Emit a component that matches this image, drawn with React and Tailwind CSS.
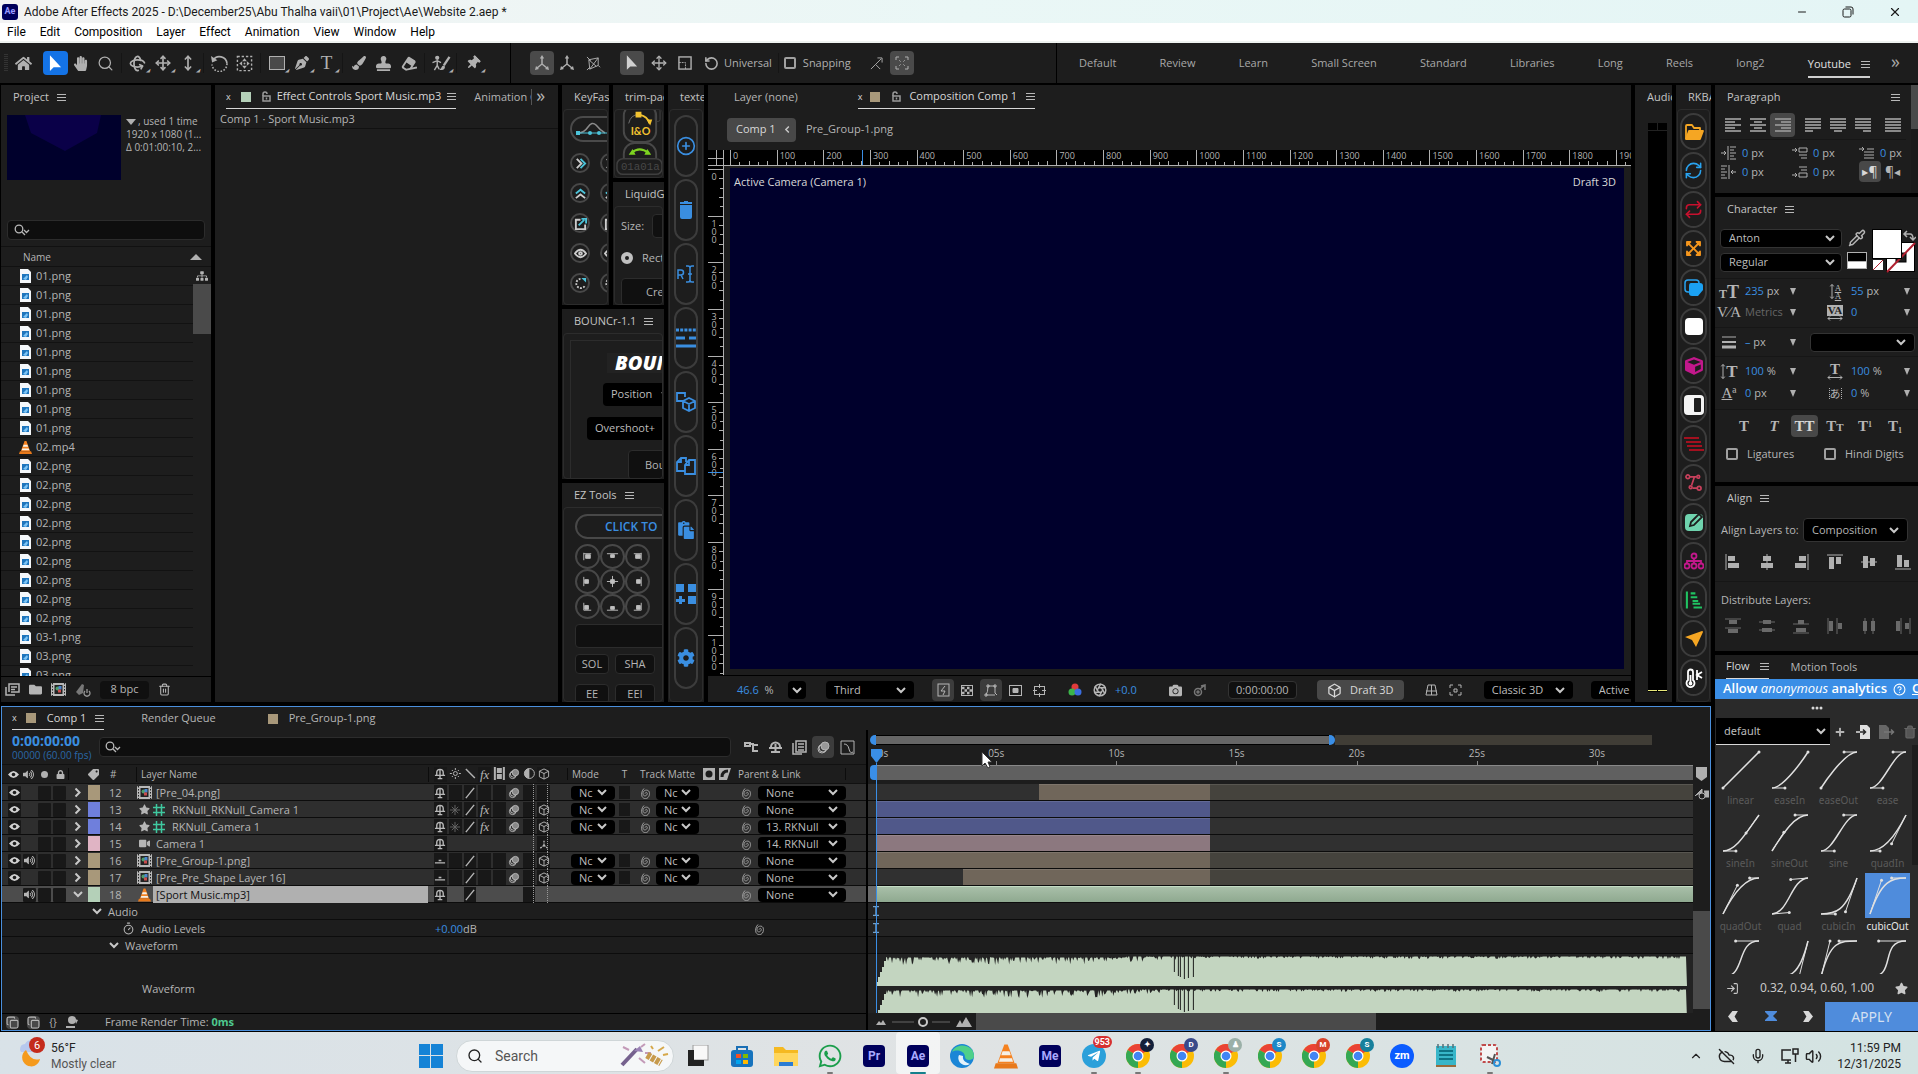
import { Fragment } from 'react';
import clsx from 'clsx';
import {
  FaHome, FaHandPaper, FaStamp, FaEraser, FaPaintBrush, FaThumbtack, FaCog, FaPaste,
  FaCube, FaSitemap, FaLocationArrow, FaExpandArrowsAlt, FaCamera, FaStar, FaFolder, FaTag,
  FaLock, FaVideo, FaWhatsapp, FaTelegramPlane, FaPenNib, FaPlus, FaVolumeUp,
} from 'react-icons/fa';
import {
  Search, CirclePlus, Repeat, RefreshCw, Trash2, Copy,
  RotateCcw, Rotate3d, Move, MoveVertical, Pipette, Aperture, Box, Timer, CircleHelp,
  ChevronUp, Mic, CloudOff, Volume2, LogIn, Minus, X,
} from 'lucide-react';

/* ---------- shared bits ---------- */

function Menu({ className }) {
  return (
    <svg viewBox="0 0 9 9" className={clsx('h-[9px] w-[9px] shrink-0', className)} stroke="#b8b8b8">
      <path d="M0 1.5h9M0 4.5h9M0 7.5h9" />
    </svg>
  );
}

function Chevron({ className }) {
  return (
    <svg viewBox="0 0 10 7" className={clsx('pointer-events-none h-[7px] w-[10px] shrink-0', className)} fill="none" stroke="#c8c8c8" strokeWidth="2">
      <path d="M1 1l4 4 4-4" />
    </svg>
  );
}

function Select({ value, label, className, chevron = 'right-2' }) {
  return (
    <div className={clsx('relative flex shrink-0 items-center rounded bg-black', className)}>
      <select aria-label={label} defaultValue={value} className="h-full w-full appearance-none bg-transparent pl-2 pr-4 text-[11px] text-[#bdbdbd] outline-none">
        <option>{value}</option>
      </select>
      <Chevron className={clsx('absolute', chevron)} />
    </div>
  );
}

function Panel({ className, children }) {
  return <section className={clsx('flex min-h-0 min-w-0 flex-col overflow-hidden bg-[#1d1d1d]', className)}>{children}</section>;
}

function Tab({ children, menu, className }) {
  return (
    <h2 className={clsx('flex h-6 shrink-0 items-center gap-2 whitespace-nowrap pl-3 text-[11px] text-[#c4c4c4]', className)}>
      {children}
      {menu && <Menu />}
    </h2>
  );
}

function LockIcon() {
  return (
    <svg viewBox="0 0 10 11" className="h-[11px] w-[10px] shrink-0" fill="none" stroke="#9a9a9a" strokeWidth="1.5">
      <path d="M2 5V3a2 2 0 0 1 4 0" />
      <path d="M2 5h7v5H2zM5.500 6.500v2" />
    </svg>
  );
}

function SearchMark() {
  return (
    <svg viewBox="0 0 18 12" className="h-3 w-[18px] shrink-0" fill="none" stroke="#b8b8b8" strokeWidth="1.300">
      <circle cx="5" cy="5" r="3.800" />
      <path d="M8 8l3 3M10 6l2.500 2.500L15 6" />
    </svg>
  );
}

/* ---------- window chrome ---------- */

function TitleBar() {
  return (
    <header className="flex h-[23px] shrink-0 items-center bg-gradient-to-r from-[#f3f3f3] via-[#eaf7f6] to-[#e4f5f5] font-['Roboto'] text-[12px] text-[#1a1a1a]">
      <div className="ml-[2px] mr-[6px] flex h-4 w-4 items-center justify-center rounded-[3px] bg-[#00005b] text-[9px] font-bold text-[#9999ff]">Ae</div>
      <h1>Adobe After Effects 2025 - D:\December25\Abu Thalha vaii\01\Project\Ae\Website 2.aep *</h1>
      <div className="ml-auto flex gap-[34px] pr-4">
        <button aria-label="Minimize"><Minus size={12} strokeWidth={2} /></button>
        <button aria-label="Restore">
          <svg viewBox="0 0 12 12" className="h-3 w-3" fill="none" stroke="currentColor">
            <rect x="1" y="3" width="8" height="8" rx="1.500" />
            <path d="M3.500 1H9a2 2 0 0 1 2 2v5.500" />
          </svg>
        </button>
        <button aria-label="Close"><X size={14} strokeWidth={2} /></button>
      </div>
    </header>
  );
}

const menus = ['File', 'Edit', 'Composition', 'Layer', 'Effect', 'Animation', 'View', 'Window', 'Help'];

function MenuBar() {
  return (
    <nav className="flex h-5 shrink-0 items-center gap-[14px] border-b-2 border-[#eef2f0] bg-white pl-[7px] font-['Roboto'] text-[12px] text-black">
      {menus.map((m) => (
        <button key={m}>{m}</button>
      ))}
    </nav>
  );
}

function Anchor() {
  return (
    <svg viewBox="0 0 18 18" className="h-[17px] w-[17px]" fill="none" stroke="currentColor" strokeWidth="1.500">
      <rect x="1.500" y="1.500" width="15" height="15" strokeDasharray="2.500 2" />
      <path d="M9 3.500l2.500 3h-5zM9 14.500l2.500-3h-5zM3.500 9l3 2.500v-5zM14.500 9l-3 2.500v-5z" fill="currentColor" stroke="none" />
      <circle cx="9" cy="9" r="1" fill="currentColor" stroke="none" />
    </svg>
  );
}

function Axis() {
  return (
    <svg viewBox="0 0 16 16" className="h-4 w-4" fill="none" stroke="currentColor" strokeWidth="1.500">
      <path d="M8 3v6M8 9l-5 4M8 9l5 4" />
      <path d="M8 0l2.200 3.500H5.800zM1 15l1-4 3 3zM15 15l-1-4-3 3z" fill="currentColor" stroke="none" />
    </svg>
  );
}

const toolGroups = [
  [{ name: 'Home', icon: <FaHome size={17} /> }],
  [
    { name: 'Selection', active: true, icon: <svg viewBox="0 0 14 18" className="h-[17px] w-[13px]"><path d="M1 0v17l4-4h8z" fill="#fff" /></svg> },
    { name: 'Hand', icon: <FaHandPaper size={15} /> },
    { name: 'Zoom', icon: <Search size={17} strokeWidth={1.75} /> },
  ],
  [
    { name: 'Orbit', more: true, icon: <Rotate3d size={17} strokeWidth={2.5} /> },
    { name: 'Pan', more: true, icon: <Move size={16} strokeWidth={2.5} /> },
    { name: 'Dolly', more: true, icon: <MoveVertical size={16} strokeWidth={2.5} /> },
  ],
  [
    { name: 'Rotation', icon: <svg viewBox="0 0 16 16" className="h-[17px] w-[17px]" fill="none" stroke="currentColor"><path d="M2 5a7 7 0 0 1 13 3" strokeWidth="1.500" /><path d="M15 8A7 7 0 0 1 1 9" strokeDasharray="1.500 1.500" strokeWidth="1.500" /><path d="M0 1l1 6 5-2z" fill="currentColor" stroke="none" /></svg> },
    { name: 'Pan Behind', icon: <Anchor /> },
  ],
  [
    { name: 'Rectangle', more: true, icon: <svg viewBox="0 0 16 14" className="h-[14px] w-4"><rect x="0.500" y="0.500" width="15" height="13" fill="#4a4a4a" stroke="currentColor" /></svg> },
    { name: 'Pen', more: true, icon: <FaPenNib size={14} /> },
    { name: 'Type', more: true, icon: <span className="font-['Liberation_Serif'] text-[19px] leading-5">T</span> },
  ],
  [
    { name: 'Brush', icon: <FaPaintBrush size={14} /> },
    { name: 'Clone Stamp', icon: <FaStamp size={15} /> },
    { name: 'Eraser', icon: <FaEraser size={15} className="-rotate-12" /> },
  ],
  [{ name: 'Roto Brush', more: true, icon: <svg viewBox="0 0 20 18" className="h-[17px] w-5" fill="none" stroke="currentColor" strokeWidth="1.500"><circle cx="6" cy="3" r="1.500" fill="currentColor" /><path d="M1 8l5-2 4 2M6 6v5l-3 5M6 11l2 4" /><path d="M19 2l-6 9" strokeWidth="2.500" /><path d="M13 11c-3 0-2 4-5 4 2 2 7 1 6-3z" fill="currentColor" stroke="none" /></svg> }],
  [{ name: 'Puppet Pin', more: true, icon: <FaThumbtack size={14} className="rotate-45" /> }],
];

const workspaces = ['Default', 'Review', 'Learn', 'Small Screen', 'Standard', 'Libraries', 'Long', 'Reels', 'long2'];

function Toolbar() {
  return (
    <div className="mb-[2px] flex h-10 shrink-0 items-center bg-[#1d1d1d] text-[11px] text-[#b0b0b0]">
      <svg viewBox="0 0 4 18" className="ml-1 mr-[3px] h-[18px] w-1" stroke="#4a4a4a"><path d="M1 0v18M3 0v18" strokeDasharray="1 1" /></svg>
      {toolGroups.map((group, i) => (
        <Fragment key={i}>
          {i > 0 && <i className={clsx('mx-[3px] h-5 w-px', i > 1 ? 'bg-[#151515]' : '')} />}
          {group.map((t) => (
            <button key={t.name} aria-label={t.name} className={clsx('relative flex h-6 w-[25px] items-center justify-center rounded', t.active && 'bg-[#1473e6]')}>
              {t.icon}
              {t.more && <i className="absolute bottom-[2px] right-0 text-[5px] leading-none">◢</i>}
            </button>
          ))}
        </Fragment>
      ))}
      <i className="ml-[25px] mr-[19px] h-full w-px bg-black" />
      <button aria-label="Local axis" className="flex h-6 w-6 items-center justify-center rounded bg-[#4a4a4a]"><Axis /></button>
      <button aria-label="World axis" className="flex h-6 w-[26px] items-center justify-center"><Axis /></button>
      <button aria-label="View axis" className="mr-[14px] flex h-6 w-[26px] items-center justify-center">
        <svg viewBox="0 0 16 16" className="h-[15px] w-[15px]" fill="none" stroke="currentColor"><path d="M3 4l10-2v8L4 14zM3 4l8 7M1 1l4 4M13 2L4 14M1 15l3-3M13 10l2 2" /></svg>
      </button>
      <button aria-label="Select" className="mr-[2px] flex h-6 w-6 items-center justify-center rounded bg-[#4a4a4a]">
        <svg viewBox="0 0 14 18" className="h-4 w-3"><path d="M1 0v17l4-4h8z" fill="#d0d0d0" /></svg>
      </button>
      <button aria-label="Position" className="flex w-[26px] justify-center"><Move size={16} /></button>
      <button aria-label="Scale" className="flex w-[26px] justify-center">
        <svg viewBox="0 0 15 15" className="h-[14px] w-[14px]" fill="none" stroke="currentColor" strokeWidth="1.500"><rect x="1" y="1" width="13" height="13" /><path d="M1 7h7v7" strokeDasharray="2 1" strokeWidth="1" /></svg>
      </button>
      <button aria-label="Rotate" className="flex w-[26px] justify-center"><RotateCcw size={15} strokeWidth={2.5} /></button>
      <span>Universal</span>
      <i className="ml-[6px] mr-[5px] h-5 w-px bg-[#151515]" />
      <input id="snap" type="checkbox" className="h-3 w-3 appearance-none rounded-[2px] border-2 border-[#a0a0a0]" />
      <label htmlFor="snap" className="ml-[7px]">Snapping</label>
      <svg viewBox="0 0 14 14" className="ml-[19px] mr-[7px] h-[13px] w-[13px]" fill="none" stroke="currentColor"><path d="M1 13l5-5 5 5M6 8l6-6M8 1h5v5" /></svg>
      <button aria-label="Snap options" className="flex h-6 w-6 items-center justify-center rounded bg-[#4a4a4a]">
        <svg viewBox="0 0 14 14" className="h-[14px] w-[14px]" fill="none" stroke="currentColor"><path d="M1 4V1h3M10 1h3v3M13 10v3h-3M4 13H1v-3" /><path d="M4 4l2 2M10 4L8 6M4 10l2-2M10 10L8 8" strokeDasharray="1 1" /></svg>
      </button>
      <nav className="ml-auto flex h-full w-[862px] items-center justify-between border-l border-black pl-[22px] pr-[18px] text-[#a8a8a8]">
        {workspaces.map((w) => (
          <button key={w}>{w}</button>
        ))}
        <button className="mt-2 flex items-center gap-[10px] border-b-2 border-[#d0d0d0] pb-1 text-[#e0e0e0]">
          Youtube <Menu />
        </button>
        <button aria-label="More workspaces" className="-ml-[22px] pb-1 text-[18px] leading-none">»</button>
      </nav>
    </div>
  );
}

/* ---------- project ---------- */

const files = [
  ...Array(9).fill('01.png'), '02.mp4', ...Array(9).fill('02.png'), '03-1.png', '03.png', '03.png',
];

function Cone({ className }) {
  return (
    <svg viewBox="0 0 14 14" className={clsx('shrink-0', className)}>
      <path d="M6 0h2l4 11H2z" fill="#f58220" />
      <path d="M5 4h4l.8 2.200H4.200zM3.500 8h7l.6 2H2.900z" fill="#f5f0e6" />
      <path d="M1 11h12l1 3H0z" fill="#e8791a" />
    </svg>
  );
}

function FileIcon() {
  return (
    <svg viewBox="0 0 11 14" className="h-[14px] w-[11px] shrink-0">
      <path d="M0 0h8l3 3v11H0z" fill="#f4f7fa" />
      <rect x="2" y="5" width="7" height="6" fill="#1d75bd" />
      <path d="M3 10l4-4 1 2-2 3z" fill="#7cc4f5" />
    </svg>
  );
}

function CompIcon() {
  return (
    <svg viewBox="0 0 15 13" className="h-[13px] w-[15px] shrink-0">
      <rect width="15" height="13" rx="1" fill="#b8b8b8" />
      <path d="M1.500 0v13M13.500 0v13" stroke="#222" strokeDasharray="1.500 1.500" />
      <rect x="3.500" y="2" width="8" height="9" fill="#222" />
      <circle cx="6.500" cy="5.500" r="2" fill="#4f9d6b" />
      <rect x="7.500" y="3" width="3" height="3.500" fill="#4a86cf" />
      <rect x="7" y="6.500" width="3" height="3" fill="#c94b4b" />
    </svg>
  );
}

function Project() {
  return (
    <Panel className="w-[210px] shrink-0">
      <Tab menu>Project</Tab>
      <div className="flex h-[111px] shrink-0 gap-[5px] pl-[6px] pt-[6px] text-[10px] leading-[13px]">
        <svg viewBox="0 0 114 65" className="h-[65px] w-[114px] shrink-0"><rect width="114" height="65" fill="#00002c" /><path d="M18 0h76l-4 18-32 18-34-18z" fill="#0a0048" /></svg>
        <p className="min-w-0 flex-1 whitespace-nowrap">
          <svg viewBox="0 0 10 6" className="mr-[2px] inline h-[6px] w-[10px]"><path d="M0 0h10L5 6z" fill="#b0b0b0" /></svg>, used 1 time<br />
          1920 x 1080 (1...<br />
          Δ 0:01:00:10, 2...
        </p>
      </div>
      <div className="mx-[6px] flex h-5 shrink-0 items-center rounded border border-[#2c2c2c] bg-[#0e0e0e] pl-[6px]">
        <SearchMark />
        <input aria-label="Search project" className="w-full bg-transparent outline-none" />
      </div>
      <div className="mt-[6px] flex h-[21px] shrink-0 items-center border-y border-[#111] pl-[22px] pr-[9px] pt-px text-[10px]">
        Name
        <svg viewBox="0 0 12 6" className="ml-auto h-[6px] w-3"><path d="M0 6h12L6 0z" fill="#b0b0b0" /></svg>
      </div>
      <div className="flex min-h-0 flex-1 overflow-hidden">
        <ul className="flex-1">
          {files.map((f, i) => (
            <li key={i} className="flex h-[19px] items-center gap-[5px] border-b border-[#121212] pl-[19px] text-[11px]">
              {f.endsWith('.mp4') ? <Cone className="-mx-px h-[13px] w-[13px]" /> : <FileIcon />}
              {f}
            </li>
          ))}
        </ul>
        <div className="w-[18px]">
          <FaSitemap size={12} className="ml-[3px] mt-[3px]" />
          <div className="mt-[2px] h-[50px] bg-[#4a4a4a]" />
        </div>
      </div>
      <div className="flex h-[26px] shrink-0 items-center gap-[9px] border-t border-black pl-1">
        <svg viewBox="0 0 15 13" className="h-[13px] w-[15px]" fill="none" stroke="currentColor" strokeWidth="1.500"><path d="M4 9V1h10v8H6M1 4v8h9M6 4h6M6 6.500h4" /></svg>
        <FaFolder size={13} />
        <CompIcon />
        <svg viewBox="0 0 16 14" className="h-[14px] w-4"><path d="M1 9l6-8 2 1-1 8-4 2z" fill="#777" /><path d="M12 6v4M10 8a3 3 0 1 0 4 0" stroke="#999" strokeWidth="1.300" fill="none" /></svg>
        <button className="h-[18px] w-[49px] rounded bg-[#101010] text-[11px]">8 bpc</button>
        <Trash2 size={13} strokeWidth={2} />
      </div>
    </Panel>
  );
}

function EffectControls() {
  return (
    <Panel className="w-[343px] shrink-0">
      <div className="flex h-6 shrink-0 items-center text-[11px]">
        <div className="ml-[11px] flex h-6 items-center border-b border-[#d8d8d8] text-[#d8d8d8]">
          <span className="mr-[10px] text-[9px]">x</span>
          <i className="mr-[10px] h-[10px] w-[10px] bg-[#b4d0b8]" />
          <LockIcon />
          <span className="ml-[6px] mr-[6px] whitespace-nowrap">Effect Controls Sport Music.mp3</span>
          <Menu />
        </div>
        <span className="ml-[18px] w-[58px] overflow-hidden whitespace-nowrap border-r border-[#555]">Animation Composer</span>
        <span className="ml-1 pb-1 text-[18px] leading-none">»</span>
      </div>
      <p className="h-[20px] border-b border-[#111] pl-[5px] pt-[2px] text-[11px] leading-4">Comp 1 · Sport Music.mp3</p>
    </Panel>
  );
}

/* ---------- script panels ---------- */

function Ring({ children, cut }) {
  return (
    <button aria-label="Key tool" className={clsx('flex h-5 w-5 shrink-0 items-center justify-center rounded-full border-2 border-[#484848]', cut && 'ml-[10px]')}>
      <svg viewBox="0 0 14 14" className="h-[13px] w-[13px] shrink-0" fill="none" strokeWidth="2">{children}</svg>
    </button>
  );
}

const keyIcons = [
  <><path d="M3 2l5 5-5 5" stroke="#ccc" /><path d="M7 2l5 5-5 5" stroke="#4cc3d9" /></>,
  <><path d="M2 7l5-4 5 4" stroke="#4cc3d9" /><path d="M2 12l5-4 5 4" stroke="#ccc" /></>,
  <><path d="M7 3H2v10h10V8" stroke="#ccc" /><path d="M5 9l6-6M8 2h5v5" stroke="#4cc3d9" /></>,
  <><path d="M1 7q6-8 12 0q-6 8-12 0z" stroke="#ccc" /><circle cx="7" cy="7" r="1.500" stroke="#ccc" /></>,
  <><path d="M7 2a5 5 0 1 0 5 7" stroke="#ccc" strokeDasharray="2 1.500" /><path d="M8 1h5v5z" fill="#4cc3d9" /></>,
];

function KeyFast() {
  return (
    <Panel className="w-[47px] shrink-0">
      <Tab>KeyFast</Tab>
      <div className="mx-px flex-1 overflow-hidden rounded border border-[#2c2c2c] pl-[6px] pt-[6px]">
        <div className="overflow-hidden">
          <svg viewBox="0 0 46 26" className="h-[26px] w-[46px]" fill="none">
            <rect x="1" y="1" width="60" height="24" rx="12" stroke="#4a4a4a" strokeWidth="2" />
            <path d="M8 17q6 0 10-6t8-2q4 5 9 8" stroke="#8a8a8a" strokeWidth="1.500" />
            <path d="M8 17h30" stroke="#4cc3d9" strokeWidth="1" />
            <path d="M6 15h4v4H6z" fill="#4cc3d9" /><circle cx="20" cy="17" r="2" fill="#4cc3d9" /><circle cx="29" cy="17" r="2" fill="#4cc3d9" />
          </svg>
          <div className="mt-[11px] flex flex-col gap-[10px]">
            {keyIcons.map((icon, i) => (
              <div key={i} className="flex"><Ring>{icon}</Ring><Ring cut>{icon}</Ring></div>
            ))}
          </div>
        </div>
      </div>
    </Panel>
  );
}

function TrimAndGlass() {
  return (
    <div className="flex w-[51px] shrink-0 flex-col gap-1">
      <Panel className="h-[93px] shrink-0">
        <Tab>trim-pack</Tab>
        <div className="mx-px flex-1 overflow-hidden rounded border border-[#2c2c2c]">
          <svg viewBox="0 0 48 66" className="h-[66px] w-[47px]" fill="none">
            <rect x="9" y="-6" width="33" height="38" rx="11" stroke="#484848" strokeWidth="2" />
            <path d="M14 13q2-9 10-9" stroke="#707070" />
            <path d="M25 4q9 2 10 9" stroke="#f2c230" strokeWidth="2" />
            <path d="M21 1h6v6h-6zM32 9l6 0-2 6z" fill="#f2c230" />
            <text x="16" y="25" fontSize="11" fontWeight="700" fill="#f2c230" fontFamily="Lato">I&amp;O</text>
            <rect x="9" y="33" width="33" height="26" rx="11" stroke="#484848" strokeWidth="2" />
            <path d="M17 43q8-7 17 0" stroke="#7ed321" strokeWidth="2" />
            <path d="M14 45l4-6 3 6zM37 45l-4-6-3 6z" fill="#7ed321" />
            <rect x="2" y="49" width="46" height="16" rx="6" fill="#1d1d1d" stroke="#3f3f3f" strokeWidth="1.500" />
            <text x="6" y="61" fontSize="11" fill="#484848" fontFamily="Liberation Mono">01a01a</text>
            <rect x="41" y="-2" width="5" height="13" rx="2" stroke="#444" />
          </svg>
        </div>
      </Panel>
      <Panel className="flex-1">
        <Tab>LiquidGlass</Tab>
        <div className="mx-px flex-1 overflow-hidden rounded border border-[#2c2c2c] pl-[6px] text-[11px]">
          <label className="mt-[7px] flex h-6 items-center gap-2">Size: <input className="w-10 shrink-0 self-stretch rounded border border-[#2c2c2c] bg-[#101010]" /></label>
          <label className="mt-3 flex items-center gap-[9px] leading-4"><input type="radio" name="shape" defaultChecked className="h-3 w-3 shrink-0 appearance-none rounded-full border-4 border-[#c0c0c0]" />Rectangle</label>
          <button className="mt-3 h-7 w-20 rounded border border-[#2c2c2c] bg-[#101010] pl-6 text-left">Create</button>
        </div>
      </Panel>
    </div>
  );
}

function Bouncr() {
  return (
    <Panel className="h-[170px] shrink-0">
      <Tab menu>BOUNCr-1.1</Tab>
      <div className="mx-px flex-1 overflow-hidden rounded border border-[#2c2c2c] pl-[6px] pt-[6px] text-[11px]">
        <div className="flex h-40 w-40 flex-col border border-[#2c2c2c]">
          <div className="ml-[36px] mt-3 bg-[#222] pl-2 text-[20px] font-extrabold italic leading-5 text-white">BOUNCr</div>
          <div className="mt-[10px] flex h-[23px] items-center"><Select label="Property" value="Position" className="ml-8 h-full w-[100px]" chevron="left-[58px]" /></div>
          <div className="mt-[11px] flex h-[23px] items-center"><Select label="Mode" value="Overshoot+" className="ml-4 h-full w-[100px]" chevron="left-20" /></div>
          <button className="ml-[57px] mt-[10px] h-[30px] shrink-0 rounded border border-[#2c2c2c] bg-[#101010] pl-4 text-left">Bounce</button>
        </div>
      </div>
    </Panel>
  );
}

const snapPoints = [
  'M3 3v8M3 4h8M5 5h5v4H5z', 'M1 4h12M5 5h4v3H5z', 'M11 3v8M3 4h8M5 5h5v4H5z',
  'M3 2v10M4 5h4v4H4z', 'M7 1v12M1 7h12M5 5h4v4H5z', 'M11 2v10M6 5h4v4H6z',
  'M3 3v8M3 11h8M4 6h4v4H4z', 'M1 11h12M5 7h4v3H5z', 'M11 3v8M3 11h8M6 6h4v4H6z',
];

function EzTools() {
  return (
    <Panel className="flex-1">
      <Tab menu>EZ Tools</Tab>
      <div className="mx-px flex-1 overflow-hidden rounded border border-[#2c2c2c] pl-[11px] pt-[6px]">
        <button className="block h-[25px] w-40 rounded-full border-2 border-[#484848] pl-7 text-left text-[12px] font-semibold text-[#3a8ee0]">CLICK TO</button>
        <div className="mt-[5px] grid w-[75px] grid-cols-3">
          {snapPoints.map((d, i) => (
            <button key={i} aria-label={`Anchor ${i + 1}`} className="flex h-[25px] w-[25px] items-center justify-center rounded-full border-2 border-[#484848]">
              <svg viewBox="0 0 14 14" className="h-[13px] w-[13px]" stroke="#c0c0c0" fill="#c0c0c0" strokeWidth="1"><path d={d} /></svg>
            </button>
          ))}
        </div>
        <input aria-label="Name" className="mt-[5px] block h-6 w-40 rounded border border-[#2c2c2c] bg-[#101010]" />
        <div className="mt-[6px] grid grid-cols-[34px_40px] gap-x-[6px] gap-y-[10px] text-[11px]">
          {['SOL', 'SHA', 'EE', 'EEI'].map((t) => (
            <button key={t} className="h-5 rounded border border-[#2c2c2c] bg-[#101010]">{t}</button>
          ))}
        </div>
      </div>
    </Panel>
  );
}

const blue = '#3a8ee0';
const textTools = [
  <CirclePlus size={20} />,
  <svg viewBox="0 0 14 18" className="h-[18px] w-[14px]" fill={blue}><path d="M5 0h4v1h4v2H1V1h4zM1 4h12v12q0 2-2 2H3q-2 0-2-2z" /></svg>,
  <svg viewBox="0 0 18 18" className="h-[18px] w-[18px]" fill="none" stroke={blue} strokeWidth="1.500"><path d="M1 14V5h3a2 2 0 0 1 0 5H1M4 10l2 4M9 1h2q2 0 2 2v12q0 2-2 2H9M17 1h-2q-2 0-2 2M17 17h-2q-2 0-2-2M11 9h4" /></svg>,
  <svg viewBox="0 0 20 20" className="h-5 w-5" stroke={blue} strokeWidth="3"><path d="M0 2h20" strokeDasharray="3 1.200" /><path d="M0 10h9M13 10h7M0 18h20" /></svg>,
  <svg viewBox="0 0 20 20" className="h-5 w-5" fill="none" stroke={blue} strokeWidth="1.800"><path d="M7 9H1V1h8v4M13 6l6 3v7l-6 3-6-3V9zM7 9l6 3 6-3M13 12v7" /></svg>,
  <svg viewBox="0 0 20 20" className="h-5 w-5" fill="none" stroke={blue} strokeWidth="1.800"><path d="M9 15H1V6l4-4h5v4M5 2v4H1M9 18V9l4-5h6v14zM13 4v5H9" /></svg>,
  <FaPaste size={18} />,
  <svg viewBox="0 0 20 20" className="h-5 w-5" fill={blue}><path d="M0 0h8v8H0zM12 0h8v8h-8zM12 12h8v8h-8zM3 12h3v3h3v3H6v2H3v-2H0v-3h3z" /></svg>,
  <FaCog size={18} />,
];

function Texte() {
  return (
    <Panel className="w-9 shrink-0">
      <Tab>texteditor</Tab>
      <div className="mx-px flex flex-1 flex-col items-center gap-[2px] overflow-hidden rounded border border-[#2c2c2c] pt-[5px] text-[#3a8ee0]">
        {textTools.map((icon, i) => (
          <button key={i} aria-label={`Text tool ${i + 1}`} className="flex h-[62px] w-6 shrink-0 items-center justify-center rounded-full border-2 border-[#3c3c3c]">
            <span className="shrink-0">{icon}</span>
          </button>
        ))}
      </div>
    </Panel>
  );
}

/* ---------- composition viewer ---------- */

const marks = Array.from({ length: 20 }, (_, i) => i * 100);

function Viewer() {
  return (
    <Panel className="flex-1">
      <div className="flex h-6 shrink-0 items-center pl-[26px] text-[11px]">
        Layer (none)
        <div className="ml-[60px] flex h-6 items-center border-b border-[#d8d8d8] text-[#d8d8d8]">
          <span className="mr-2 text-[9px]">x</span>
          <i className="mr-[11px] h-[10px] w-[10px] bg-[#a8987a]" />
          <LockIcon />
          <span className="ml-2 mr-[9px]">Composition Comp 1</span>
          <Menu />
        </div>
      </div>
      <div className="flex h-[41px] shrink-0 items-center pl-[19px] text-[11px]">
        <button className="flex h-6 w-[69px] items-center justify-between rounded bg-[#484848] pl-[9px] pr-1 text-[#d8d8d8]">
          Comp 1 <Chevron className="scale-75 rotate-90" />
        </button>
        <span className="ml-[10px]">Pre_Group-1.png</span>
      </div>
      <div className="flex h-4 shrink-0 bg-black text-[9px] leading-3">
        <div className="w-[22px] shrink-0 border-b border-[#b0b0b0]">
          <svg viewBox="0 0 22 15" className="h-[15px] w-[22px]" stroke="#b0b0b0"><path d="M0 8.500h16M8.500 0v15M15.500 0v15" /></svg>
        </div>
        <div className="relative flex min-w-0 flex-1 overflow-hidden border-b border-[#b0b0b0]">
          {marks.map((m) => (
            <div key={m} className="relative flex shrink-0 items-end border-l border-[#b0b0b0]" style={{ width: `${(46.63 / 901) * 100}%` }}>
              <span className="absolute left-[2px] top-0">{m}</span>
              <i className="h-1 flex-1" />
              {[1, 2, 3, 4].map((t) => <i key={t} className={clsx('flex-1 border-l border-[#b0b0b0]', t % 2 ? 'h-[3px]' : 'h-1')} />)}
            </div>
          ))}
          {/* pointer position marker */}
          <i className="absolute left-[132px] top-0 h-full w-px bg-[#3a8ee6]" />
        </div>
      </div>
      <div className="flex min-h-0 flex-1">
        <div className="relative flex w-4 shrink-0 flex-col overflow-hidden border-r border-[#b0b0b0] bg-black pt-[3px] text-[9px] leading-2">
          {marks.slice(0, 11).map((m) => (
            <div key={m} className="relative flex shrink-0 flex-col items-end border-t border-[#b0b0b0]" style={{ height: '9.22%' }}>
              <span className="absolute left-[3px] top-[3px] w-[6px] break-all text-center">{m}</span>
              <i className="w-1 flex-1" />
              {[1, 2, 3, 4].map((t) => <i key={t} className={clsx('flex-1 border-t border-[#b0b0b0]', t % 2 ? 'w-1' : 'w-[3px]')} />)}
            </div>
          ))}
          <i className="absolute left-0 top-[306px] h-px w-full bg-[#3a8ee6]" />
        </div>
        <div className="mb-[6px] ml-[6px] mr-[7px] mt-[2px] flex flex-1 justify-between bg-[#00002c] pl-1 pr-2 pt-[6px] text-[11px] leading-4 text-[#d8d8d8]">
          <span>Active Camera (Camera 1)</span>
          <span>Draft 3D</span>
        </div>
      </div>
      <div className="flex h-[27px] shrink-0 items-center overflow-hidden border-t border-black pt-[2px] text-[11px]">
        <span className="ml-[29px] w-[51px] shrink-0"><b className="font-normal text-[#3a8ee0]">46.6</b> &nbsp;%</span>
        <Select label="Magnification" value="" className="h-[18px] w-[18px]" chevron="right-1" />
        <Select label="Resolution" value="Third" className="ml-5 h-[18px] w-[88px]" />
        <div className="ml-[18px] flex items-center gap-[2px]">
          <IconBox on><rect x="2" y="1" width="11" height="12" /><path d="M9 3l-4 5h4l-2 4" /></IconBox>
          <IconBox><rect x="1.500" y="2.500" width="11" height="10" /><path d="M2 5h10M2 10h10" strokeWidth="2.500" strokeDasharray="2.500 2.500" /><path d="M4.500 7.500h8" strokeWidth="2.500" strokeDasharray="2.500 2.500" /></IconBox>
          <IconBox on><path d="M4 3h7v7l2 2M4 3q0 6-2 9h9" /><path d="M3 2h2v2H3zM10 2h2v2h-2zM1 11h2v2H1z" /></IconBox>
          <IconBox><rect x="1.500" y="2.500" width="12" height="10" /><path d="M5 5.500h5v4H5z" fill="currentColor" /></IconBox>
          <IconBox><rect x="2.500" y="3.500" width="10" height="8" /><path d="M7.500 1v4M7.500 10v4M1 7.500h4M10 7.500h4" /></IconBox>
        </div>
        <svg viewBox="0 0 14 14" className="ml-[18px] h-[14px] w-[14px] shrink-0"><circle cx="7" cy="4" r="3.500" fill="#e03b3b" /><circle cx="4" cy="9" r="3.500" fill="#3bb54a" /><circle cx="10" cy="9" r="3.500" fill="#3a6ee0" /></svg>
        <Aperture size={14} strokeWidth={2.5} className="ml-[11px] shrink-0" />
        <span className="ml-2 shrink-0 text-[#3a8ee0]">+0.0</span>
        <FaCamera size={13} className="ml-[32px] shrink-0" />
        <svg viewBox="0 0 14 14" className="ml-[11px] h-[14px] w-[14px] shrink-0" fill="none" stroke="#777" strokeWidth="1.500"><circle cx="5" cy="9" r="3.500" /><path d="M8 3l4-1v5M7 6l5-4" /><circle cx="5" cy="9" r="1" /></svg>
        <span className="ml-[21px] w-[69px] shrink-0 rounded border border-[#333] bg-[#101010] text-center leading-4">0:00:00:00</span>
        <button className="ml-5 flex h-5 w-[87px] shrink-0 items-center justify-center gap-2 rounded bg-[#484848] text-[#d8d8d8]"><Box size={15} />Draft 3D</button>
        <div className="ml-[17px] flex items-center gap-[2px]">
          <IconBox><path d="M4 2h7l2 10H2zM2 8h11M7.500 2v10" /></IconBox>
          <IconBox><path d="M2 5V2h3M10 2h3v3M13 9v3h-3M5 12H2V9M6 6h3v3H6z" /></IconBox>
        </div>
        <Select label="Renderer" value="Classic 3D" className="ml-[17px] h-[18px] w-[89px]" />
        <Select label="View" value="Active Camera" className="ml-[18px] h-[18px] w-[120px]" />
      </div>
    </Panel>
  );
}

function IconBox({ on, children }) {
  return (
    <button aria-label="View option" className={clsx('flex h-[22px] w-[22px] shrink-0 items-center justify-center rounded', on && 'bg-[#3c3c3c]')}>
      <svg viewBox="0 0 15 15" className="h-[15px] w-[15px]" fill="none" stroke="currentColor">{children}</svg>
    </button>
  );
}

function AudioPanel() {
  return (
    <Panel className="w-[37px] shrink-0">
      <Tab>Audio</Tab>
      <div className="mb-[10px] ml-[13px] mt-[14px] flex w-[19px] flex-1 flex-col bg-black">
        <div className="flex h-2 border-b border-[#222]"><i className="w-[10px] border-r border-[#222]" /></div>
        <div className="mt-auto flex gap-px border-b border-black"><i className="h-px flex-1 bg-[#e8e87a]" /><i className="h-px flex-1 bg-[#e8e87a]" /></div>
      </div>
    </Panel>
  );
}

const rkTools = [
  <svg viewBox="0 0 20 18" className="h-[18px] w-5" stroke="#f5a623" strokeWidth="1.800" strokeLinejoin="round"><path d="M2 16V3q0-1 1-1h5l2 3h6v3" fill="none" /><path d="M2 16L5 8h14l-3 8z" fill="#f5a623" /></svg>,
  <RefreshCw size={19} color="#29a3f0" />,
  <Repeat size={19} color="#c8102e" />,
  <FaExpandArrowsAlt size={17} color="#f5961d" />,
  <svg viewBox="0 0 20 18" className="h-[18px] w-5"><rect x="1" y="1" width="14" height="12" rx="3" fill="none" stroke="#29a3f0" strokeWidth="1.500" /><path d="M7 4h9q3 0 3 3v4l-5 6H8q-3 0-3-3V7q0-3 2-3z" fill="#1ba1f3" /></svg>,
  <i className="block h-[17px] w-[18px] rounded bg-white" />,
  <FaCube size={18} color="#c2188b" />,
  <svg viewBox="0 0 20 20" className="h-5 w-5"><rect width="20" height="20" rx="4" fill="#f4f4f4" /><rect x="10" y="3" width="7" height="14" rx="1" fill="#1d1d1d" /></svg>,
  <svg viewBox="0 0 20 14" className="h-[14px] w-5" stroke="#a3101f" strokeWidth="2"><path d="M0 1h15M2 5h15M3 9h15M5 13h15" /></svg>,
  <svg viewBox="0 0 18 18" className="h-[17px] w-[17px]" fill="none" stroke="#c8405c" strokeWidth="1.800"><circle cx="3" cy="3" r="2" /><circle cx="14" cy="3" r="1.500" /><circle cx="15" cy="15" r="2" /><circle cx="6" cy="14" r="1.500" /><path d="M5 3h7M10 3L7 12M8 15h5" /></svg>,
  <svg viewBox="0 0 18 18" className="h-[18px] w-[18px]"><rect y="1" width="18" height="17" rx="4" fill="#6fd3ae" /><path d="M5 13l1-4 8-8 3 3-8 8z" fill="#6fd3ae" stroke="#1d1d1d" strokeWidth="1.800" /></svg>,
  <svg viewBox="0 0 20 18" className="h-[18px] w-5" fill="none" stroke="#c2188b" strokeWidth="1.800"><circle cx="10" cy="4" r="2.500" /><circle cx="3" cy="14" r="2.500" /><circle cx="10" cy="14" r="2.500" /><circle cx="17" cy="14" r="2.500" /><path d="M10 6v5M3 11V9h14v2" /></svg>,
  <svg viewBox="0 0 18 18" className="h-[18px] w-[17px]" stroke="#20c262" strokeWidth="2.200"><path d="M2 0v18M6 2h5M6 6h7M8 10h6M8 13h8M9 17h9" /></svg>,
  <svg viewBox="0 0 18 18" className="h-[18px] w-[18px]"><path d="M0 7L17 1q1 0 1 1l-7 15-4-7z" fill="#f5a623" /></svg>,
  <svg viewBox="0 0 18 20" className="h-5 w-[18px]" fill="none" stroke="#fff" strokeWidth="1.800"><path d="M3 12V4a2.500 2.500 0 0 1 5 0v8a4 4 0 1 1-5 0z" /><path d="M5.500 7v8M12 2v10M17 4l-5 3 5 3" /><circle cx="5.500" cy="15.500" r="1" fill="#fff" /></svg>,
];

function RkPanel() {
  return (
    <Panel className="w-[35px] shrink-0">
      <Tab>RKBAR</Tab>
      <div className="mx-px flex flex-1 flex-col items-center gap-[2px] overflow-hidden rounded border border-[#2c2c2c] pt-[3px]">
        {rkTools.map((icon, i) => (
          <button key={i} aria-label={`RK tool ${i + 1}`} className="flex h-[37px] w-[27px] shrink-0 items-center justify-center rounded-full border-2 border-[#3c3c3c]">
            <span className="shrink-0">{icon}</span>
          </button>
        ))}
      </div>
    </Panel>
  );
}

/* ---------- right sidebar ---------- */

const alignLines = [
  [16, 10, 16, 10, 16], [16, 8, 16, 8, 16], [16, 10, 16, 10, 16],
  [16, 16, 16, 16, 8], [16, 16, 16, 16, 8], [16, 16, 16, 16, 8], [16, 16, 16, 16, 16],
];
const alignSide = ['start', 'center', 'end', 'start', 'center', 'end', 'start'];

function AlignGlyph({ lines, side }) {
  const x = (w) => (side === 'start' ? 0 : side === 'end' ? 16 - w : (16 - w) / 2);
  return (
    <svg viewBox="0 0 16 15" className="h-[15px] w-4" stroke="#8a8a8a" strokeWidth="2">
      {lines.map((w, i) => <path key={i} d={`M${x(w)} ${1 + i * 3}h${w}`} />)}
    </svg>
  );
}

function Px({ d, value, unit = 'px' }) {
  return (
    <div className="flex items-center gap-[5px]">
      <svg viewBox="0 0 16 14" className="h-[14px] w-4" fill="none" stroke="#b0b0b0"><path d={d} /></svg>
      <span><b className="font-normal text-[#3a8ee0]">{value}</b> {unit}</span>
    </div>
  );
}

function Paragraph() {
  return (
    <Panel className="h-[108px] shrink-0">
      <div className="flex flex-1">
        <div className="min-w-0 flex-1">
          <div className="flex items-center justify-between pr-[11px]"><Tab>Paragraph</Tab><Menu /></div>
          <div className="mx-[5px] mt-1 flex h-[27px] items-start border-b border-[#161616]">
            {alignLines.map((l, i) => (
              <button key={i} aria-label={`Align ${i + 1}`} className={clsx('flex h-6 w-[25px] items-center justify-center rounded', i === 2 && 'bg-[#484848]', (i === 3 || i === 6) && 'ml-[5px]')}>
                <AlignGlyph lines={l} side={alignSide[i]} />
              </button>
            ))}
          </div>
          <div className="grid grid-cols-[71px_67px_1fr] items-center pl-[6px] pt-[5px] text-[11px] leading-4">
            <Px value="0" d="M0 7h5M3 5l2 2-2 2M7 0v14M9 1h6M9 4h4M9 7h6M9 10h4M9 13h6" />
            <Px value="0" d="M0 4h5M3 2l2 2-2 2M7 2h8v4H7zM7 9h8M9 12h6" />
            <Px value="0" d="M0 3h5M3 1l2 2-2 2M8 3h7M5 6h10M5 9h10M5 12h10" />
            <Px value="0" d="M0 1h6M0 4h4M0 7h6M0 10h4M0 13h6M8 0v14M15 7h-5M12 5l-2 2 2 2" />
            <Px value="0" d="M0 10h5M3 8l2 2-2 2M7 8h8v4H7zM7 2h8M9 5h6" />
            <div className="flex gap-1 text-[14px]">
              <button aria-label="Left to right" className="flex h-[21px] w-[22px] items-center justify-center rounded bg-[#484848] text-[#d8d8d8]"><span className="text-[8px]">▶</span>¶</button>
              <button aria-label="Right to left" className="flex items-center">¶<span className="text-[8px]">◀</span></button>
            </div>
          </div>
        </div>
        <div className="w-[7px] bg-[#1a1a1a]"><div className="h-11 bg-[#4a4a4a]" /></div>
      </div>
    </Panel>
  );
}

function Tri() {
  return <svg viewBox="0 0 6 7" className="h-[7px] w-[6px] shrink-0"><path d="M0 0h6L3 7z" fill="#b0b0b0" /></svg>;
}

function Field({ icon, value, unit, dim }) {
  return (
    <div className="flex h-[21px] items-center gap-[6px] pr-2">
      <span className="flex w-5 shrink-0 justify-center font-['Liberation_Serif'] text-[15px] leading-none">{icon}</span>
      <span className="flex-1 whitespace-nowrap"><b className={clsx('font-normal', dim ? 'text-[#666]' : 'text-[#3a8ee0]')}>{value}</b> {unit}</span>
      <Tri />
    </div>
  );
}

// small arrows drawn next to the letters of the character fields
function Arrow({ up, className }) {
  return (
    <svg viewBox="0 0 16 5" className={clsx(up ? 'h-[5px] w-4 rotate-90' : 'h-[5px] w-4', className)} fill="none" stroke="#b0b0b0">
      <path d="M1 2.500h14M3 .5l-2 2 2 2M13 .5l2 2-2 2" />
    </svg>
  );
}

function Character() {
  return (
    <Panel className="h-[285px] shrink-0">
      <Tab menu>Character</Tab>
      <div className="flex gap-[5px] pl-[5px] pt-2">
        <div className="flex flex-col gap-[5px]">
          <Select label="Font family" value="Anton" className="h-[19px] w-[122px] border border-[#333]" chevron="right-[6px]" />
          <Select label="Font style" value="Regular" className="h-[19px] w-[122px] border border-[#333]" chevron="right-[6px]" />
        </div>
        <div className="flex w-5 flex-col items-center gap-[5px]">
          <Pipette size={18} strokeWidth={2} />
          <div className="w-full border border-[#b0b0b0]"><i className="block h-2 bg-black" /><i className="block h-[7px] border-t border-[#b0b0b0] bg-white" /></div>
        </div>
        <svg viewBox="0 0 44 44" className="h-11 w-11">
          <rect x="14.500" y="13.500" width="28" height="29" fill="#fff" stroke="#000" />
          <rect x="24" y="24" width="10" height="9" fill="#1d1d1d" stroke="#000" />
          <path d="M15 43L43 14" stroke="#b02030" strokeWidth="2" />
          <rect x="0.500" y="0.500" width="29" height="29" fill="#fff" stroke="#000" />
          <rect x="1" y="31" width="10" height="10" fill="#fff" /><path d="M1 41l10-10" stroke="#b02030" />
          <path d="M33 5h5q3 0 3 5M35 2l-3 3 3 3M38 8l3 3 3-3" fill="none" stroke="#b0b0b0" strokeWidth="1.500" />
        </svg>
      </div>
      <div className="mt-[5px] grid grid-cols-[85px_1fr] gap-x-[21px] border-t border-[#161616] pb-[4px] pl-1 pt-[2px] text-[11px]">
        <Field icon={<span className="flex items-end"><b className="text-[12px] leading-3">T</b><b className="text-[18px] leading-4">T</b></span>} value="235" unit="px" />
        <Field icon={<span className="flex items-center"><Arrow up className="-mx-[5px]" /><span className="flex flex-col text-[9px] leading-2"><u>A</u><u>A</u></span></span>} value="55" unit="px" />
        <Field icon="V∕A" value="Metrics" dim />
        <Field icon={<span className="flex flex-col items-center"><b className="bg-[#b0b0b0] px-px text-[11px] leading-[11px] text-[#1d1d1d]">VA</b><Arrow /></span>} value="0" />
      </div>
      <div className="flex h-[30px] shrink-0 items-center gap-[6px] border-y border-[#161616] pl-1 text-[11px]">
        <div className="w-[85px]"><Field icon={<svg viewBox="0 0 14 13" className="h-[13px] w-[14px]" stroke="#b0b0b0"><path d="M0 1h14" /><path d="M0 6h14" strokeWidth="2" /><path d="M0 11h14" strokeWidth="3" /></svg>} value="–" unit="px" /></div>
        <Select label="Stroke order" value="" className="mr-[3px] h-[19px] min-w-0 flex-1 border border-[#333]" />
      </div>
      <div className="grid grid-cols-[85px_1fr] gap-x-[21px] gap-y-px border-b border-[#161616] pb-[5px] pl-1 pt-1 text-[11px]">
        <Field icon={<span className="flex items-center"><Arrow up className="-mx-[5px]" /><b className="text-[17px]">T</b></span>} value="100" unit="%" />
        <Field icon={<span className="flex flex-col items-center"><b className="text-[15px] leading-3">T</b><Arrow /></span>} value="100" unit="%" />
        <Field icon={<><u>A</u>ª</>} value="0" unit="px" />
        <Field icon={<span className="border-x border-dotted border-[#b0b0b0] font-['Noto_Sans_CJK_JP'] text-[11px]">あ</span>} value="0" unit="%" />
      </div>
      <div className="flex h-8 shrink-0 items-center gap-1 pl-[16px] font-['Liberation_Serif'] text-[15px] font-bold">
        <button className="w-[26px]">T</button>
        <button className="w-[26px] italic">T</button>
        <button className="h-[22px] w-[27px] rounded bg-[#484848] text-[#d8d8d8]">TT</button>
        <button className="w-[26px]">T<span className="text-[11px]">T</span></button>
        <button className="w-[26px]">T<sup className="text-[8px]">1</sup></button>
        <button className="w-[26px]">T<sub className="text-[8px]">1</sub></button>
      </div>
      <div className="flex items-center pl-[11px] pt-1 text-[11px]">
        <input id="lig" type="checkbox" className="h-3 w-3 appearance-none rounded-[2px] border-2 border-[#a0a0a0]" />
        <label htmlFor="lig" className="ml-[9px] w-[77px]">Ligatures</label>
        <input id="hindi" type="checkbox" className="h-3 w-3 appearance-none rounded-[2px] border-2 border-[#a0a0a0]" />
        <label htmlFor="hindi" className="ml-[9px]">Hindi Digits</label>
      </div>
    </Panel>
  );
}

const alignPaths = [
  ['M1 0v16', 'M3 2h7v5H3zM3 9h11v5H3z'], ['M8 0v16', 'M4 2h8v5H4zM2 9h12v5H2z'], ['M15 0v16', 'M6 2h7v5H6zM2 9h11v5H2z'],
  ['M0 1h16', 'M2 3h5v12H2zM9 3h5v7H9z'], ['M0 8h16', 'M2 2h5v12H2zM9 4h5v8H9z'], ['M0 15h16', 'M2 1h5v12H2zM9 6h5v7H9z'],
];
const distPaths = [
  ['M0 1h16M0 10h16', 'M4 2h8v4H4zM3 11h10v4H3z'], ['M0 4h16M0 12h16', 'M4 2h8v4H4zM3 10h10v4H3z'], ['M0 6h16M0 15h16', 'M5 2h6v4H5zM3 10h10v4H3z'],
  ['M1 0v16M10 0v16', 'M2 3h4v10H2zM11 5h4v6h-4z'], ['M4 0v16M12 0v16', 'M2 3h4v10H2zM10 3h4v10h-4z'], ['M6 0v16M15 0v16', 'M1 3h4v10H1zM10 5h4v6h-4z'],
];

function GlyphRow({ items, dim }) {
  return (
    <div className={clsx('flex gap-[18px] pl-[10px]', dim ? 'text-[#6a6a6a]' : 'text-[#b0b0b0]')}>
      {items.map(([line, box], i) => (
        <button key={i} aria-label={`Layer align ${i + 1}`} className="shrink-0">
          <svg viewBox="0 0 16 16" className="h-4 w-4"><path d={line} stroke="currentColor" /><path d={box} fill="currentColor" /></svg>
        </button>
      ))}
    </div>
  );
}

function Align() {
  return (
    <Panel className="h-[165px] shrink-0">
      <Tab menu>Align</Tab>
      <div className="mt-2 flex h-6 items-center pl-[6px] text-[11px]">
        <label htmlFor="alignTo" className="w-[82px] whitespace-nowrap">Align Layers to:</label>
        <div className="relative flex h-6 w-[105px] items-center rounded border border-[#333] bg-black">
          <select id="alignTo" className="h-full w-full appearance-none bg-transparent pl-2 outline-none"><option>Composition</option></select>
          <Chevron className="absolute right-2" />
        </div>
      </div>
      <div className="flex h-10 shrink-0 items-center border-b border-[#161616]"><GlyphRow items={alignPaths} /></div>
      <p className="my-[10px] pl-[6px] text-[11px] leading-4">Distribute Layers:</p>
      <GlyphRow items={distPaths} dim />
    </Panel>
  );
}

const curves = [
  ['linear', 0, 0, 1, 1], ['easeIn', 0.36, 0, 1, 1], ['easeOut', 0, 0, 0.64, 1], ['ease', 0.36, 0, 0.64, 1],
  ['sineIn', 0.36, 0, 0.64, 0.5], ['sineOut', 0.33, 0.52, 0.64, 1], ['sine', 0.37, 0, 0.63, 1], ['quadIn', 0.28, 0, 0.6, 0.2],
  ['quadOut', 0.4, 0.8, 0.74, 1], ['quad', 0.48, 0.04, 0.52, 0.96], ['cubicIn', 0.4, 0, 0.68, 0.06], ['cubicOut', 0.32, 0.94, 0.6, 1],
  ['', 0.65, 0, 0.35, 1], ['', 0.5, 0, 0.75, 0], ['', 0.25, 1, 0.5, 1], ['', 0.76, 0, 0.24, 1],
];

function Curve({ name, p }) {
  const [x1, y1, x2, y2] = [p[0] * 36, 37 - p[1] * 36, p[2] * 36, 37 - p[3] * 36];
  const on = name === 'cubicOut';
  return (
    <button aria-label={name || 'curve'} className="flex w-[49px] shrink-0 flex-col items-center">
      <span className={clsx('flex h-[45px] w-[45px] items-center justify-center', on && 'bg-[#4f8cdc]')}>
        <svg viewBox="-2 -1 40 40" className="h-10 w-10" fill="none" stroke="#e0e0e0">
          <path d={`M0 37C${x1} ${y1} ${x2} ${y2} 36 1`} strokeWidth="1.500" />
          <path d={`M0 37L${x1} ${y1}M36 1L${x2} ${y2}`} />
          <circle cx={x1} cy={y1} r="1.500" fill="#e0e0e0" stroke="none" />
          <circle cx={x2} cy={y2} r="1.500" fill="#e0e0e0" stroke="none" />
        </svg>
      </span>
      {name && <span className={clsx("h-[18px] font-['Noto_Sans'] text-[10px] leading-4", on ? 'text-[#e8e8e8]' : 'text-[#5a5a5a]')}>{name}</span>}
    </button>
  );
}

function Flow() {
  return (
    <Panel className="flex-1">
      <div className="flex h-6 shrink-0 items-center gap-[22px] pl-[11px] text-[11px]">
        <span className="flex h-[23px] items-center gap-[10px] border-b border-[#d8d8d8] text-[#d8d8d8]">Flow <Menu /></span>
        Motion Tools
      </div>
      <div className="flex h-5 shrink-0 items-center gap-[6px] overflow-hidden whitespace-nowrap bg-[#3a8ee6] pl-2 text-[13px] font-semibold text-white">
        <span>Allow <em className="font-normal">anonymous</em> analytics</span><CircleHelp size={13} className="shrink-0" /><u>OK</u>
      </div>
      <div className="flex min-h-0 flex-1 flex-col bg-[#2a2a2a] pl-px font-['Noto_Sans']">
        <svg viewBox="0 0 12 4" className="mb-[8px] ml-[95px] mt-[7px] h-1 w-3 shrink-0" fill="#d8d8d8"><circle cx="2" cy="2" r="1.500" /><circle cx="6" cy="2" r="1.500" /><circle cx="10" cy="2" r="1.500" /></svg>
        <div className="flex h-[27px] shrink-0 items-center">
          <Select label="Preset group" value="default" className="h-[27px] w-[114px] rounded-none border-b border-[#d8d8d8] bg-[#2a2a2a]" chevron="right-1" />
          <FaPlus size={10} className="ml-[5px]" />
          <svg viewBox="0 0 14 14" className="ml-[11px] h-[14px] w-[14px]"><path d="M4 0h7l3 3v11H4z" fill="#e0e0e0" /><path d="M0 7h9M7 4.500L9.500 7 7 9.500" stroke="#2a2a2a" strokeWidth="1.500" fill="none" /><path d="M0 7h4" stroke="#e0e0e0" strokeWidth="1.500" /></svg>
          <svg viewBox="0 0 16 14" className="ml-[9px] h-[14px] w-4"><path d="M0 0h7l3 3v11H0z" fill="#666" /><path d="M5 7h9M12 4.500L14.500 7 12 9.500" stroke="#777" strokeWidth="1.500" fill="none" /></svg>
          <Trash2 size={14} className="ml-2 text-[#666]" fill="#555" />
        </div>
        <div className="flex min-h-0 flex-1 overflow-hidden">
          <div className="grid flex-1 grid-cols-[49px_49px_49px_49px] content-start pt-[2px]">
            {curves.map(([name, ...p], i) => <Curve key={i} name={name} p={p} />)}
          </div>
          <div className="w-[6px]"><div className="h-30 bg-[#1d1d1d]" /></div>
        </div>
        <div className="flex h-[28px] shrink-0 items-center justify-between px-[10px] text-[12px] text-[#c8c8c8]">
          <LogIn size={13} /><span>0.32, 0.94, 0.60, 1.00</span><FaStar size={13} />
        </div>
        <div className="flex h-[29px] shrink-0 items-center">
          <div className="flex flex-1 justify-between px-3">
            <svg viewBox="0 0 10 10" className="h-[11px] w-[11px]" fill="#d8d8d8"><path d="M4 0h5L6 5l3 5H4L0 5z" /></svg>
            <svg viewBox="0 0 12 10" className="h-[10px] w-3" fill="#4f8cdc"><path d="M0 0h12v1L8 5l4 4v1H0V9l4-4-4-4z" /></svg>
            <svg viewBox="0 0 10 10" className="h-[11px] w-[11px]" fill="#d8d8d8"><path d="M6 0H1l3 5-3 5h5l4-5z" /></svg>
          </div>
          <button className="h-full w-[93px] bg-[#4f8cdc] text-[14px] text-[#d4e0f2]">APPLY</button>
        </div>
      </div>
    </Panel>
  );
}

/* ---------- timeline ---------- */

const layers = [
  { n: 12, eye: 1, color: '#a8987a', kind: 'comp', name: '[Pre_04.png]', sw: 's·/··m··', parent: 'None', mode: 1, start: 6.8, bar: '#70665a', tail: '#45433d' },
  { n: 13, eye: 1, color: '#6f7fdc', kind: 'null', name: 'RKNull_RKNull_Camera 1', sw: 's*/f·m·3', parent: 'None', mode: 1, start: 0, bar: '#50588a' },
  { n: 14, eye: 1, color: '#6f7fdc', kind: 'null', name: 'RKNull_Camera 1', sw: 's*/f·m·3', parent: '13. RKNull_', mode: 1, start: 0, bar: '#50588a' },
  { n: 15, eye: 1, color: '#e0b4c4', kind: 'cam', name: 'Camera 1', sw: 's......c', parent: '14. RKNull_', start: 0, bar: '#8c787f' },
  { n: 16, eye: 1, snd: 1, color: '#a8987a', kind: 'comp', name: '[Pre_Group-1.png]', sw: '-·/··m·3', parent: 'None', mode: 1, start: 0, bar: '#70665a', tail: '#45433d' },
  { n: 17, eye: 1, color: '#a8987a', kind: 'comp', name: '[Pre_Pre_Shape Layer 16]', sw: '-·/··m·3', parent: 'None', mode: 1, start: 3.6, bar: '#70665a', tail: '#45433d' },
  { n: 18, snd: 1, color: '#b4d0b8', kind: 'audio', name: '[Sport Music.mp3]', sw: 's./...·.', parent: 'None', sel: 1, start: 0 },
];

const SPAN = 34;
const CLIP_END = 13.92;
const cols = 'grid grid-cols-[15px_15px_15px_15px_20px_16px_32px_minmax(0,1fr)_123px_20px_44px_19px_22px_43px_59px_88px_20px] items-center';

function Eye() {
  return <svg viewBox="0 0 11 9" className="h-[9px] w-[11px]"><path d="M0 4.500q5.500-7 11 0q-5.500 7-11 0z" fill="#d0d0d0" /><circle cx="5.500" cy="4.500" r="1.800" fill="#1d1d1d" /></svg>;
}

function Whirl({ className }) {
  return <svg viewBox="0 0 12 12" className={clsx('h-3 w-3', className)} fill="none" stroke="#a0a0a0"><path d="M6 6.500c1-2 3-1 2 1s-4 2-4-1 3-4 5-3 2 5 0 7-5 1-6-1c-1-3 0-6 2-8" /></svg>;
}

const switchArt = {
  s: <path d="M1 8h11M3 8V5a3.500 3.500 0 0 1 7 0v3M6.500 2v10M4 11.500h5" strokeWidth="1.500" />,
  '-': <path d="M1 8.500h11M5 6h3" strokeWidth="1.500" />,
  '*': <path d="M6.500 1v11M1 6.500h11M3 3l7 7M10 3l-7 7" stroke="#666" />,
  '/': <path d="M11 1L2 12" strokeWidth="1.500" />,
  m: <><circle cx="5" cy="8" r="3.500" /><circle cx="6" cy="6.500" r="3.500" /><circle cx="8" cy="5" r="3.500" fill="#888" /></>,
  3: <path d="M6.500 1l5 2.500v6l-5 2.500-5-2.500v-6zM1.500 3.500l5 2.500 5-2.500M6.500 6v6" />,
  c: <path d="M6.500 3v5M6.500 8l-4 3M6.500 8l4 3" strokeDasharray="2 1" strokeWidth="1.500" />,
};

function Switch({ c }) {
  return (
    <span className={clsx('flex h-[15px] w-[15px] items-center justify-center px-px', c !== '.' && c !== 'm' && 'bg-[#181818] bg-clip-content')}>
      {c === 'f' && <em className="font-['Liberation_Serif'] text-[13px] leading-none">fx</em>}
      {switchArt[c] && <svg viewBox="0 0 13 13" className="h-3 w-3 shrink-0" fill="none" stroke="#b8b8b8">{switchArt[c]}</svg>}
    </span>
  );
}

function LayerRow({ l }) {
  const cell = 'mx-px h-[14px] rounded-[1px] bg-[#181818] flex items-center justify-center';
  return (
    <div className={clsx(cols, 'h-[17px] shrink-0 border-b border-[#0c0c0c] pl-[5px] text-[11px] leading-none', l.sel ? 'bg-[#4c4c4c]' : 'bg-[#2e2e2e]')}>
      <span className={clsx(l.eye && cell)}>{l.eye && <Eye />}</span>
      <span className={clsx(l.snd && cell)}>{l.snd && <FaVolumeUp size={11} />}</span>
      <span className={cell} />
      <span className={cell} />
      <Chevron className={clsx('ml-[6px]', !l.sel && '-rotate-90')} />
      <i className="ml-px h-[15px] w-3" style={{ background: l.color }} />
      <span className="pl-[6px]">{l.n}</span>
      <span className="flex h-full items-center">
        <span className="flex w-[18px] shrink-0 justify-center">
          {l.kind === 'comp' && <CompIcon />}
          {l.kind === 'null' && <FaStar size={11} />}
          {l.kind === 'cam' && <FaVideo size={11} />}
          {l.kind === 'audio' && <Cone className="h-[14px] w-[13px]" />}
        </span>
        {l.kind === 'null' && <svg viewBox="0 0 12 12" className="mr-1 h-3 w-3 shrink-0" stroke="#3fc9a0" strokeWidth="1.500"><path d="M3.500 0v12M8.500 0v12M0 3.500h12M0 8.500h12" /></svg>}
        <span className={clsx('flex h-full flex-1 items-center pl-[3px]', l.sel && 'bg-[#b0b0b0] text-[#101010]')}>{l.name}</span>
      </span>
      <span className="flex pl-[5px]">{[...l.sw].map((c, i) => <Switch key={i} c={c} />)}</span>
      <span className="-ml-[18px] h-[17px] w-[15px] border-x border-dotted border-[#999]" />
      {l.mode ? <Select label="Mode" value="Nc" className="h-[14px]" /> : <i />}
      {l.mode ? <i className="mx-1 h-[13px] bg-[#181818]" /> : <i />}
      {l.mode ? <Whirl className="ml-[5px]" /> : <i />}
      {l.mode ? <Select label="Track matte" value="Nc" className="h-[14px]" /> : <i />}
      <Whirl className="ml-[41px]" />
      <Select label="Parent" value={l.parent} className="h-[14px]" />
      <i />
    </div>
  );
}

function LayerHeader() {
  return (
    <div className={clsx(cols, 'h-5 shrink-0 border-y border-[#111] pl-[6px] text-[10px]')}>
      <Eye /><FaVolumeUp size={11} /><i className="ml-[3px] h-[7px] w-[7px] rounded-full bg-[#b0b0b0]" /><FaLock size={9} className="ml-[3px]" />
      <i className="h-3 border-l border-[#0c0c0c]" />
      <FaTag size={11} className="-scale-x-100" />
      <span className="pl-[6px]">#</span>
      <span className="border-l border-[#0c0c0c] pl-1">Layer Name</span>
      <span className="flex border-l border-[#0c0c0c] pl-1">
        <Switch c="s" />
        <svg viewBox="0 0 13 13" className="h-[13px] w-[15px]" fill="none" stroke="#b0b0b0"><circle cx="6.500" cy="6.500" r="2" /><path d="M6.500 1v2M6.500 10v2M1 6.500h2M10 6.500h2M3 3l1 1M9 9l1 1M10 3L9 4M4 9l-1 1" /></svg>
        <svg viewBox="0 0 13 13" className="h-[13px] w-[15px]" stroke="#b0b0b0" strokeWidth="1.500"><path d="M2 2l9 9" /></svg>
        <Switch c="f" />
        <svg viewBox="0 0 13 13" className="h-[13px] w-[15px]" fill="#b0b0b0"><path d="M1 0h2v13H1zM10 0h2v13h-2zM4 1h5v5H4zM4 7h5v5H4z" /></svg>
        <Switch c="m" />
        <svg viewBox="0 0 13 13" className="h-[13px] w-[15px]"><circle cx="6.500" cy="6.500" r="5" fill="none" stroke="#b0b0b0" /><path d="M6.500 1.500a5 5 0 0 0 0 10z" fill="#b0b0b0" /></svg>
        <Switch c="3" />
      </span>
      <i className="ml-4 h-3 border-l border-[#0c0c0c]" />
      <span className="pl-px">Mode</span>
      <span className="text-center">T</span>
      <span className="col-span-2 pl-[6px]">Track Matte</span>
      <span className="flex gap-1 pl-1">
        <svg viewBox="0 0 12 12" className="h-3 w-3"><path d="M0 0h12v12H0z" fill="#b0b0b0" /><circle cx="6" cy="6" r="3.500" fill="#1d1d1d" /></svg>
        <svg viewBox="0 0 12 12" className="h-3 w-3"><path d="M0 0h12L8 12H0z" fill="#b0b0b0" /><path d="M3 9q0-6 6-6" stroke="#1d1d1d" strokeWidth="3" fill="none" /></svg>
      </span>
      <span className="-ml-5 border-r border-[#0c0c0c] leading-3">Parent &amp; Link</span>
      <i />
    </div>
  );
}

// deterministic noise so the waveform does not flicker between renders
const noise = (i) => Math.abs(Math.sin(i * 12.9898) * 43758.5453) % 1;

function wavePath(seed) {
  let d = 'M0 30V26H2V21H4V16H6V11H8V5H10V1';
  for (let x = 11; x < 810; x += 1) {
    const amp = x < 250 ? 9 : x < 300 ? 6 : 3;
    const n = noise(x + seed);
    d += `L${x} ${(n > 0.5 ? n * n * n * amp : 0.5 + (x < 250 ? 1 : 0)).toFixed(1)}`;
  }
  return `${d}L810 30z`;
}

function Wave({ seed, className }) {
  return (
    <svg viewBox="0 0 816 30" preserveAspectRatio="none" className={clsx('block w-full', className)}>
      <path d={wavePath(seed)} fill="#c3d5c0" />
      <path d="M298 0v16M302 0v20M304 0v21M308 0v23M312 0v22M317 0v21" stroke="#1d1d1d" />
    </svg>
  );
}

function Bar({ l }) {
  const pct = (s) => `${(s / SPAN) * 100}%`;
  return (
    <div className={clsx('flex h-[17px] shrink-0 border-b border-[#0c0c0c] pl-[8px]', l.sel ? 'bg-[#6a6a6a]' : 'bg-[#303030]')}>
      {l.sel ? (
        <i className="h-full flex-1 border-t border-[#c4dcc4] bg-gradient-to-b from-[#a8bfa8] to-[#8fa990]" />
      ) : (
        <>
          <i className="h-full border-t border-white/10" style={{ marginLeft: pct(l.start), width: pct(CLIP_END - l.start), background: l.bar }} />
          {l.tail && <i className="h-full flex-1 border-t border-white/10" style={{ background: l.tail }} />}
        </>
      )}
    </div>
  );
}

function Timeline() {
  return (
    <section className="flex h-[325px] shrink-0 flex-col border border-[#4a8fdc] bg-[#1d1d1d]">
      <div className="flex h-[23px] shrink-0 items-center pl-[10px] text-[11px]">
        <div className="flex h-[22px] items-center border-b border-[#d8d8d8] text-[#d8d8d8]">
          <span className="mr-[9px] text-[9px]">x</span>
          <i className="mr-[11px] h-[10px] w-[10px] bg-[#a8987a]" />
          <span className="mr-[9px]">Comp 1</span>
          <Menu />
        </div>
        <span className="ml-[37px]">Render Queue</span>
        <i className="ml-[52px] mr-[11px] h-[10px] w-[10px] bg-[#a8987a]" />
        Pre_Group-1.png
      </div>
      <div className="flex min-h-0 flex-1">
        <div className="flex w-[866px] shrink-0 flex-col border-r-2 border-black">
          <div className="flex h-[34px] shrink-0 items-center pl-[10px]">
            <div className="w-[87px] text-[#3a8ee0]">
              <p className="text-[14px] font-bold leading-4">0:00:00:00</p>
              <p className="text-[10px] leading-3 text-[#2a68a8]">00000 (60.00 fps)</p>
            </div>
            <div className="flex h-5 w-[632px] items-center rounded border border-[#2c2c2c] bg-[#0e0e0e] pl-[5px]">
              <SearchMark />
              <input aria-label="Search layers" className="w-full bg-transparent outline-none" />
            </div>
            <div className="ml-[9px] flex gap-[2px]">
              <IconBox><path d="M1 3h5v3H1zM6 4h3v7h5M9 5h5" strokeWidth="2" /></IconBox>
              <IconBox><path d="M1 8h13M3 7a4 4 0 0 1 9 0M7.500 4v9M3 12h9" strokeWidth="2" /></IconBox>
              <IconBox><path d="M1 3v11h9M4 1h10v11H4zM6 4h6M6 7h6M6 10h6" strokeWidth="1.500" /></IconBox>
              <IconBox on><circle cx="6" cy="9" r="4" /><circle cx="7" cy="8" r="4" /><circle cx="9" cy="6" r="4" fill="#999" /></IconBox>
              <IconBox><path d="M1 1h13v13H1zM4 4q4 0 5 5t4 3" /></IconBox>
            </div>
          </div>
          <LayerHeader />
          {layers.map((l) => <LayerRow key={l.n} l={l} />)}
          <div className="flex h-[17px] shrink-0 items-center gap-[6px] border-b border-[#0c0c0c] pl-[90px] pt-px text-[11px] leading-none"><Chevron />Audio</div>
          <div className="flex h-[17px] shrink-0 items-center border-b border-[#0c0c0c] pl-[120px] pt-px text-[11px] leading-none">
            <Timer size={13} className="mr-[6px]" />
            <span className="w-[294px]">Audio Levels</span>
            <span><b className="font-normal text-[#3a8ee0]">+0.00</b>dB</span>
            <Whirl className="ml-auto mr-[101px]" />
          </div>
          <div className="flex h-[17px] shrink-0 items-center gap-[6px] border-b border-[#0c0c0c] pl-[107px] pt-px text-[11px] leading-none"><Chevron />Waveform</div>
          <div className="flex flex-1 items-center pl-[140px] pt-3 text-[11px]">Waveform</div>
          <div className="flex h-[17px] shrink-0 items-center gap-1 border-t border-black pl-1 text-[11px]">
            <Copy size={13} className="rounded bg-[#484848]" />
            <Copy size={13} className="ml-1 rounded bg-[#484848]" />
            <span className="w-[18px] text-center text-[10px]">{'{}'}</span>
            <svg viewBox="0 0 13 12" className="h-3 w-[13px]" fill="#b0b0b0"><circle cx="6" cy="4" r="4" /><path d="M0 10h9v2H0zM9 3l3 1-2 4z" /></svg>
            <span className="ml-[22px]">Frame Render Time: <b className="text-[#4fc98f]">0ms</b></span>
          </div>
        </div>
        <div className="flex min-w-0 flex-1 flex-col">
          <div className="flex min-h-0 flex-1">
            <div className="relative flex min-w-0 flex-1 flex-col overflow-hidden">
              <div className="mt-[5px] flex h-[10px] shrink-0 pl-[2px]">
                <i className="w-[6px] rounded-l-full bg-[#3a8ee6]" />
                <i className="h-full border-y border-black bg-[#666]" style={{ width: '55.1%' }} />
                <i className="w-[6px] rounded-r-full bg-[#3a8ee6]" />
                <i className="h-full bg-[#403d36]" style={{ width: '38.5%' }} />
              </div>
              <div className="flex h-5 shrink-0 overflow-hidden pl-[8px] text-[10px]">
                {[0, 5, 10, 15, 20, 25, 30].map((s) => (
                  <div key={s} className="shrink-0" style={{ width: `${(5 / SPAN) * 100}%` }}>
                    <span className={clsx('block leading-4', s ? '-ml-2' : '-ml-1')}>{String(s).padStart(2, '0')}s</span>
                    {s > 0 && <i className="block h-1 w-px bg-[#888]" />}
                  </div>
                ))}
              </div>
              <div className="mb-[4px] flex h-[15px] shrink-0 pl-[2px]"><i className="w-[6px] rounded-l bg-[#3a8ee6]" /><i className="flex-1 border-t border-[#888] bg-[#606060]" /></div>
              {layers.map((l) => <Bar key={l.n} l={l} />)}
              {[0, 1].map((i) => (
                <div key={i} className="flex h-[17px] shrink-0 items-center border-b border-[#0c0c0c] bg-[#232323] pl-[5px]">
                  <svg viewBox="0 0 6 10" className="h-[10px] w-[6px]" stroke="#6fa0cc" fill="none"><path d="M0 .500h6M0 9.500h6M3 0v10" strokeWidth="1.500" /></svg>
                </div>
              ))}
              <div className="h-[17px] shrink-0 border-b border-[#0c0c0c]" />
              <div className="min-h-0 flex-1 overflow-hidden bg-[#232323] pl-[8px] pt-[2px]">
                <Wave seed={0} className="h-[30px]" />
                <Wave seed={400} className="mt-[3px] h-[30px]" />
              </div>
              {/* playhead */}
              <div className="absolute bottom-0 left-[3px] top-[19px] flex w-[11px] flex-col items-center">
                <svg viewBox="0 0 11 14" className="h-[14px] w-[11px] shrink-0"><path d="M0 0h11v7l-5.500 7L0 7z" fill="#3a8ee6" /></svg>
                <i className="w-px flex-1 bg-[#3a8ee6]" />
              </div>
              {/* mouse pointer */}
              <svg viewBox="0 0 12 18" className="absolute left-[113px] top-[21px] h-[18px] w-3"><path d="M1 1v14l3-3 3 5 2-1-2-5h4z" fill="#fff" stroke="#333" /></svg>
            </div>
            <div className="flex w-[17px] shrink-0 flex-col items-center pt-[37px] text-[#b0b0b0]">
              <svg viewBox="0 0 11 14" className="h-[14px] w-[11px]"><path d="M0 0h11v10l-5.500 4L0 10z" fill="currentColor" /></svg>
              <svg viewBox="0 0 14 12" className="mt-[7px] h-3 w-[14px]" fill="none" stroke="currentColor"><path d="M0 8l7-7v4M9 3h5v6h-4" fill="currentColor" /><circle cx="7" cy="8" r="3" fill="#1d1d1d" /></svg>
              <div className="mb-1 mt-auto h-[98px] w-full bg-[#4a4a4a]" />
            </div>
          </div>
          <div className="flex h-[17px] shrink-0 items-center pl-2">
            <svg viewBox="0 0 96 14" className="h-[14px] w-24 shrink-0" fill="#b0b0b0">
              <path d="M0 10l3-4 2 2 2-3 3 5zM80 12l4-7 2 4 4-7 6 10z" />
              <path d="M16 7h22M56 7h18" stroke="#666" />
              <circle cx="47" cy="7" r="4" fill="none" stroke="#c8c8c8" strokeWidth="2" />
            </svg>
            <div className="ml-1 h-full w-[48%] bg-[#4a4a4a]" />
          </div>
        </div>
      </div>
    </section>
  );
}

/* ---------- taskbar ---------- */

function AdobeTile({ t }) {
  return <span className="flex h-[22px] w-[22px] items-center justify-center rounded bg-[#00005b] text-[12px] font-bold text-[#a9a9ff]">{t}</span>;
}

function Chrome({ badge, color = '#1e88c8' }) {
  return (
    <span className="relative">
      <svg viewBox="0 0 24 24" className="h-6 w-6">
        <circle cx="12" cy="12" r="12" fill="#fbbc05" />
        <path d="M12 12L1.600 6A12 12 0 0 1 22.400 6z" fill="#ea4335" />
        <path d="M12 12L1.600 6A12 12 0 0 0 12 24z" fill="#34a853" />
        <circle cx="12" cy="12" r="5.500" fill="#fff" /><circle cx="12" cy="12" r="4.300" fill="#4285f4" />
      </svg>
      <b className="absolute -right-1 -top-[6px] flex h-[14px] w-[14px] items-center justify-center rounded-full text-[8px] text-white" style={{ background: color }}>{badge}</b>
    </span>
  );
}

const apps = [
  { name: 'Task view', icon: <svg viewBox="0 0 22 22" className="h-[22px] w-[22px]"><rect x="6" width="15" height="15" fill="#f8f8f8" stroke="#999" /><path d="M1 5h6v10h10v6H1z" fill="#222" /></svg> },
  { name: 'Store', icon: <svg viewBox="0 0 24 24" className="h-6 w-6"><path d="M7 6V3h10v3" fill="none" stroke="#1a6fb5" strokeWidth="2" /><rect x="1" y="6" width="22" height="17" rx="3" fill="#1673bd" /><path d="M6 10h5v4H6z" fill="#f25022" /><path d="M13 10h5v4h-5z" fill="#7fba00" /><path d="M6 16h5v4H6z" fill="#00a4ef" /><path d="M13 16h5v4h-5z" fill="#ffb900" /></svg> },
  { name: 'Explorer', icon: <svg viewBox="0 0 24 22" className="h-[22px] w-6"><path d="M0 2h9l3 3h12v15H0z" fill="#f5b921" /><path d="M0 8h24v13H0z" fill="#ffd65c" /><path d="M5 17h14v4H5z" fill="#2b7cd3" /></svg> },
  { name: 'WhatsApp', dot: 1, icon: <FaWhatsapp size={26} color="#1b9e4b" /> },
  { name: 'Premiere', icon: <AdobeTile t="Pr" /> },
  { name: 'After Effects', active: 1, icon: <AdobeTile t="Ae" /> },
  { name: 'Edge', icon: <svg viewBox="0 0 24 24" className="h-6 w-6"><circle cx="12" cy="12" r="12" fill="#1b86d6" /><path d="M2 8C6-2 24 0 24 12c0 5-9 5-9 1 0-6-8-8-13-5z" fill="#4fd08a" /><path d="M9 11c-3 6 4 13 11 9-3-1-8-3-7-8z" fill="#e4f2fa" /></svg> },
  { name: 'VLC', icon: <Cone className="h-[25px] w-[24px]" /> },
  { name: 'Media Encoder', icon: <AdobeTile t="Me" /> },
  { name: 'Telegram', dot: 1, icon: <span className="relative flex h-6 w-6 items-center justify-center rounded-full bg-[#2ba0da]"><FaTelegramPlane size={14} color="#fff" /><b className="absolute -right-[6px] -top-2 rounded-full bg-[#d63030] px-[2px] text-[9px] leading-3 text-white">953</b></span> },
  { name: 'Chrome 1', dot: 1, icon: <Chrome badge="✦" color="#14203a" /> },
  { name: 'Chrome 2', icon: <Chrome badge="D" color="#3a4a8a" /> },
  { name: 'Chrome 3', dot: 1, icon: <Chrome badge="♟" color="#9ab0a8" /> },
  { name: 'Chrome 4', icon: <Chrome badge="S" /> },
  { name: 'Chrome 5', icon: <Chrome badge="M" color="#d8442a" /> },
  { name: 'Chrome 6', icon: <Chrome badge="S" color="#17809c" /> },
  { name: 'Zoom', icon: <span className="flex h-6 w-6 items-center justify-center rounded-full bg-[#0b5cff] text-[11px] font-bold text-white">zm</span> },
  { name: 'Notepad', icon: <svg viewBox="0 0 20 24" className="h-6 w-5"><rect y="2" width="20" height="20" fill="#38b6c9" /><path d="M3 7h14M3 11h14M3 15h14" stroke="#0f7385" strokeWidth="2" /><path d="M0 21h20v2H0z" fill="#9a6a3a" /><path d="M2 0v4M7 0v4M12 0v4M17 0v4" stroke="#55707a" strokeWidth="1.500" /></svg> },
  { name: 'Snipping Tool', dot: 1, icon: <svg viewBox="0 0 24 24" className="h-6 w-6"><rect x="3" y="1" width="16" height="17" rx="2" fill="#f4f4f4" stroke="#c04a4a" strokeWidth="2" strokeDasharray="3 2" /><path d="M9 13l8 4M17 10l-3 10" stroke="#555" strokeWidth="2" /><circle cx="19" cy="19" r="3" fill="none" stroke="#2b8fd6" strokeWidth="2" /></svg> },
];

function Taskbar() {
  return (
    <footer className="mt-px flex h-[42px] shrink-0 items-center bg-gradient-to-r from-[#d9e2e8] via-[#e0e3e4] to-[#d3e3e2] font-['Roboto'] text-[12px] text-[#222]">
      <div className="flex w-[412px] items-center gap-[3px] pl-[18px] pt-[6px]">
        <svg viewBox="0 0 30 34" className="-mt-[6px] h-[34px] w-[30px]"><path d="M2 14q0-6 5-6 3-6 8-2v10H3z" fill="#b7c8ee" /><path d="M8 14a9 9 0 1 0 14 9q-9 3-14-9z" fill="#f59a1d" /><circle cx="19" cy="9" r="8" fill="#c42b1c" /><text x="16" y="13" fontSize="11" fill="#fff">6</text></svg>
        <div className="leading-4"><p>56°F</p><p className="text-[#555]">Mostly clear</p></div>
      </div>
      <button aria-label="Start" className="flex w-[38px] justify-center pt-[6px]">
        <svg viewBox="0 0 24 24" className="h-6 w-6" fill="#1583d6"><path d="M0 0h11v11H0zM12 0h12v11H12zM0 12h11v12H0zM12 12h12v12H12z" /></svg>
      </button>
      <label className="ml-[6px] mt-[6px] flex h-8 w-[218px] items-center gap-3 rounded-full border border-[#cfd6d8] bg-[#f5f7f8] pl-[10px] text-[14px]">
        <Search size={16} />
        <input aria-label="Search" placeholder="Search" className="w-[100px] bg-transparent outline-none placeholder:text-[#555]" />
        <svg viewBox="0 0 50 26" className="ml-3 h-[26px] w-[50px]" fill="none"><path d="M3 22L18 6" stroke="#75618e" strokeWidth="4" /><path d="M15 8l6-5 3 6z" fill="#9a82b5" /><path d="M22 4l4-3M26 10h6M20 15l6 5M4 4l6 3" stroke="#c39ab8" strokeWidth="2" /><path d="M28 12l14 8" stroke="#c79a4c" strokeWidth="7" strokeDasharray="4 1" /><path d="M39 8l6-4M34 6l-2-3M44 12l5-1" stroke="#d6a84b" strokeWidth="2" /></svg>
      </label>
      <div className="ml-[2px] flex h-full">
        {apps.map((a) => (
          <button key={a.name} aria-label={a.name} className={clsx('relative flex w-11 items-center justify-center pt-[6px]', a.active && 'rounded bg-white/60')}>
            {a.icon}
            {(a.dot || a.active) && <i className={clsx('absolute bottom-0 h-[2px] rounded', a.active ? 'w-4 bg-[#14808c]' : 'w-[6px] bg-[#777]')} />}
          </button>
        ))}
      </div>
      <div className="ml-auto flex items-center gap-[15px] pr-[17px] pt-[6px]">
        <ChevronUp size={14} /><CloudOff size={17} /><Mic size={16} />
        <span className="flex gap-[6px]">
          <svg viewBox="0 0 18 16" className="h-4 w-[18px]" fill="none" stroke="currentColor" strokeWidth="1.500"><path d="M10 2H1v10h9M4 15h6M7 12v3M12 1h5v5h-5zM14.500 6v8" /></svg>
          <Volume2 size={17} />
        </span>
        <div className="text-right leading-4"><p>11:59 PM</p><p>12/31/2025</p></div>
      </div>
    </footer>
  );
}

export default function App() {
  return (
    <div className="flex h-screen flex-col overflow-hidden bg-black font-['Open_Sans','Noto_Sans',sans-serif] text-[#b5b5b5]">
      <TitleBar />
      <MenuBar />
      <Toolbar />
      <main className="flex min-h-0 flex-1 gap-1 pl-px">
        <div className="flex min-w-0 flex-1 flex-col gap-1">
          <div className="flex min-h-0 flex-1 gap-1">
            <Project />
            <EffectControls />
            <div className="flex w-[102px] shrink-0 flex-col gap-1">
              <div className="flex h-[220px] shrink-0 gap-1">
                <KeyFast />
                <TrimAndGlass />
              </div>
              <Bouncr />
              <EzTools />
            </div>
            <Texte />
            <Viewer />
            <AudioPanel />
            <RkPanel />
          </div>
          <Timeline />
        </div>
        <aside className="flex w-[203px] shrink-0 flex-col gap-1">
          <Paragraph />
          <Character />
          <Align />
          <Flow />
        </aside>
      </main>
      <Taskbar />
    </div>
  );
}
